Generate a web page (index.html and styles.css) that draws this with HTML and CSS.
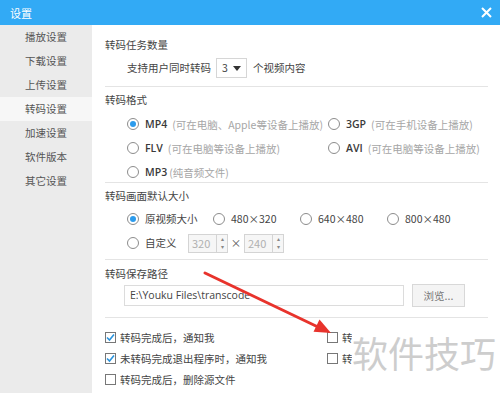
FILE: index.html
```html
<!DOCTYPE html>
<html lang="zh">

<head>
    <meta charset="UTF-8">
    <meta name="viewport" content="width=device-width, initial-scale=1.0">
    <title>设置</title>
    <link rel="stylesheet" href="styles.css">
</head>

<body>
    <div class="window">
        <div class="titlebar">
            <span class="title">设置</span>
            <svg class="close" width="11" height="11" viewBox="0 0 11 11">
                <path d="M1 1 L10 10 M10 1 L1 10" stroke="#fff" stroke-width="2" />
            </svg>
        </div>

        <div class="main">
            <ul class="sidebar">
                <li>播放设置</li>
                <li>下载设置</li>
                <li>上传设置</li>
                <li class="active">转码设置</li>
                <li>加速设置</li>
                <li>软件版本</li>
                <li>其它设置</li>
            </ul>

            <div class="content">
                <!-- 任务数量 -->
                <section class="group g-count">
                    <div class="group-title">转码任务数量</div>
                    <div class="row indent">
                        支持用户同时转码
                        <span class="select">3
                            <svg width="8" height="5" viewBox="0 0 8 5"><path d="M0 0 H8 L4 5 Z" fill="#333" /></svg>
                        </span>
                        个视频内容
                    </div>
                </section>

                <!-- 格式 -->
                <section class="group g-format">
                    <div class="group-title">转码格式</div>
                    <div class="format-grid">
                        <label class="opt"><span class="radio checked"></span><b>MP4</b><span class="hint">(可在电脑、Apple等设备上播放)</span></label>
                        <label class="opt"><span class="radio"></span><b>3GP</b><span class="hint">(可在手机设备上播放)</span></label>
                        <label class="opt"><span class="radio"></span><b>FLV</b><span class="hint">(可在电脑等设备上播放)</span></label>
                        <label class="opt"><span class="radio"></span><b>AVI</b><span class="hint">(可在电脑等设备上播放)</span></label>
                        <label class="opt"><span class="radio"></span><b>MP3</b><span class="hint short">(纯音频文件)</span></label>
                    </div>
                </section>

                <!-- 画面大小 -->
                <section class="group g-size">
                    <div class="group-title">转码画面默认大小</div>
                    <div class="row indent sizes">
                        <label class="opt w86"><span class="radio checked"></span>原视频大小</label>
                        <label class="opt w87"><span class="radio"></span>480×320</label>
                        <label class="opt w87"><span class="radio"></span>640×480</label>
                        <label class="opt"><span class="radio"></span>800×480</label>
                    </div>
                    <div class="row indent custom">
                        <label class="opt"><span class="radio"></span>自定义</label>
                        <span class="spin"><span class="spin-val">320</span><span class="spin-btn">▴<br>▾</span></span>
                        <span class="times">×</span>
                        <span class="spin"><span class="spin-val">240</span><span class="spin-btn">▴<br>▾</span></span>
                    </div>
                </section>

                <!-- 保存路径 -->
                <section class="group g-path">
                    <div class="group-title">转码保存路径</div>
                    <div class="path-row">
                        <span class="path-input">E:\Youku Files\transcode</span>
                        <span class="browse">浏览...</span>
                    </div>
                </section>

                <!-- 其它选项 -->
                <section class="group g-checks">
                    <div class="check-grid">
                        <label class="chk"><span class="box checked"><svg width="9" height="9" viewBox="0 0 9 9"><path d="M1 4.5 L3.5 7 L8 1.5" fill="none" stroke="#2a93dd" stroke-width="1.6" /></svg></span>转码完成后，通知我</label>
                        <label class="chk"><span class="box"></span>转</label>
                        <label class="chk"><span class="box checked"><svg width="9" height="9" viewBox="0 0 9 9"><path d="M1 4.5 L3.5 7 L8 1.5" fill="none" stroke="#2a93dd" stroke-width="1.6" /></svg></span>未转码完成退出程序时，通知我</label>
                        <label class="chk"><span class="box"></span>转</label>
                        <label class="chk"><span class="box"></span>转码完成后，删除源文件</label>
                    </div>
                </section>
            </div>
        </div>

        <div class="watermark">软件技巧</div>

        <svg class="arrow" width="500" height="393" viewBox="0 0 500 393">
            <line x1="205" y1="273" x2="318" y2="327" stroke="#e8332c" stroke-width="3" stroke-linecap="round" />
            <polygon points="331,333 313.5,331.8 319.5,319.6" fill="#e8332c" />
        </svg>
    </div>
</body>

</html>
```

FILE: styles.css
```css
body {
    margin: 0;
    font-family: "Noto Sans CJK SC", "Noto Sans", sans-serif;
    font-size: 10.5px;
    color: #444;
    background-color: #fff;
}

.window {
    position: relative;
    width: 500px;
    height: 393px;
    overflow: hidden;
    display: flex;
    flex-direction: column;
}

.titlebar {
    height: 25px;
    flex: none;
    background-color: #32aaf5;
    display: flex;
    align-items: center;
    justify-content: space-between;
    padding: 0 8px 0 10px;
}

.title {
    color: #fff;
    font-size: 11px;
}

.main {
    flex: 1;
    display: flex;
}

.sidebar {
    width: 92px;
    margin: 0;
    padding: 0;
    list-style: none;
    background-color: #ebebeb;
}

.sidebar li {
    height: 24px;
    line-height: 24px;
    padding-left: 25px;
    color: #555;
}

.sidebar li.active {
    background-color: #f7f7f7;
}

.content {
    flex: 1;
    padding: 0 12px 0 13px;
}

.group {
    display: flex;
    flex-direction: column;
    border-bottom: 1px solid #e4e4e4;
}

.group-title {
    line-height: 20px;
    height: 20px;
}

.row {
    height: 20px;
    line-height: 20px;
    display: flex;
    align-items: center;
}

.indent {
    padding-left: 22px;
}

/* sections */
.g-count {
    padding: 10px 0 8px;
    gap: 3px;
}

.g-format {
    padding: 3px 0 0;
    gap: 4px;
}

.g-size {
    padding: 3px 0 6px;
    gap: 3px;
}

.g-size .custom {
    margin-top: 1px;
}

.g-path {
    padding: 4px 0 10px;
}

.g-checks {
    padding-top: 9px;
    border-bottom: none;
}

/* select */
.select {
    display: inline-flex;
    align-items: center;
    justify-content: space-between;
    width: 31px;
    height: 20px;
    box-sizing: border-box;
    border: 1px solid #d6d6d6;
    padding: 0 5px 0 5px;
    margin: 0 6px 0 5px;
}

/* radio options */
.format-grid {
    display: grid;
    grid-template-columns: 201px auto;
    row-gap: 4px;
    padding-left: 22px;
}

.opt {
    display: flex;
    align-items: center;
    height: 20px;
    white-space: nowrap;
}

.opt b {
    font-family: "Open Sans", "Noto Sans", sans-serif;
    font-weight: 600;
    color: #3a3a3a;
}

.hint {
    color: #a6a6a6;
    margin-left: 5px;
}

.hint.short {
    margin-left: 2px;
}

.radio {
    width: 12px;
    height: 12px;
    box-sizing: border-box;
    border: 1px solid #8c8c8c;
    border-radius: 50%;
    margin-right: 6px;
    display: inline-flex;
    align-items: center;
    justify-content: center;
    flex: none;
}

.radio.checked::after {
    content: "";
    width: 6px;
    height: 6px;
    border-radius: 50%;
    background-color: #2c9bec;
}

.w86 {
    width: 86px;
}

.w87 {
    width: 87px;
}

/* spin boxes */
.custom .opt {
    width: 61px;
}

.spin {
    display: inline-flex;
    width: 40px;
    height: 19px;
    box-sizing: border-box;
    border: 1px solid #d4d4d4;
    background-color: #f6f6f6;
}

.spin-val {
    flex: 1;
    color: #b0b0b0;
    padding-left: 3px;
    line-height: 17px;
    font-size: 11px;
}

.spin-btn {
    width: 10px;
    border-left: 1px solid #d4d4d4;
    font-size: 6px;
    line-height: 8px;
    color: #888;
    text-align: center;
}

.times {
    width: 16px;
    text-align: center;
    color: #555;
}

/* path */
.path-row {
    display: flex;
    align-items: center;
    height: 23px;
    padding-left: 19px;
}

.path-input {
    width: 280px;
    height: 21px;
    box-sizing: border-box;
    border: 1px solid #dcdcdc;
    line-height: 19px;
    padding-left: 5px;
    color: #444;
    font-family: "Open Sans", "Noto Sans", sans-serif;
    font-size: 10.5px;
}

.browse {
    width: 53px;
    height: 23px;
    box-sizing: border-box;
    margin-left: 8px;
    border: 1px solid #d8d8d8;
    background-color: #f4f4f4;
    color: #777;
    text-align: center;
    line-height: 21px;
}

/* checkboxes */
.check-grid {
    display: grid;
    grid-template-columns: 222px auto;
    row-gap: 1px;
}

.chk {
    display: flex;
    align-items: center;
    height: 20px;
    white-space: nowrap;
}

.box {
    width: 11px;
    height: 11px;
    box-sizing: border-box;
    border: 1px solid #777;
    margin-right: 4px;
    display: inline-flex;
    align-items: center;
    justify-content: center;
    flex: none;
}

/* overlays */
.watermark {
    position: absolute;
    left: 352px;
    top: 327px;
    font-size: 36px;
    line-height: 50px;
    color: #cdcdcd;
    background-color: #fff;
}

.arrow {
    position: absolute;
    left: 0;
    top: 0;
    pointer-events: none;
}
```
